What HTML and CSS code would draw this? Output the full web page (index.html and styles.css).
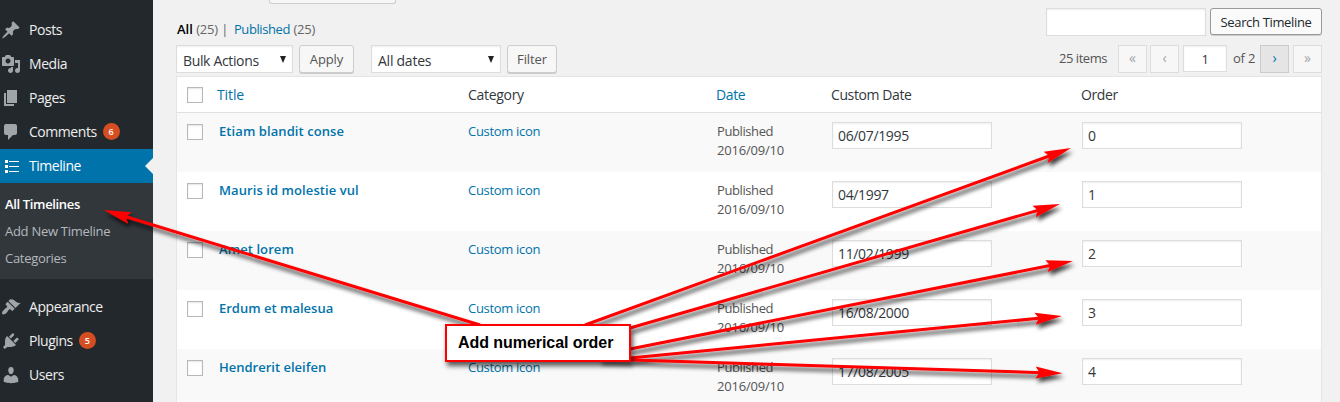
FILE: index.html
```html
<!DOCTYPE html>
<html lang="en">
<head>
<meta charset="utf-8">
<title>Timeline</title>
<link rel="stylesheet" href="styles.css">
</head>
<body>
<div class="admin">
  <nav class="sidebar">
    <a class="item"><svg class="icon" viewBox="0 0 20 20"><path d="M10.44 3.02l1.82-1.82 6.36 6.35-1.83 1.82c-1.05-.68-2.48-.57-3.41.36l-.75.75c-.92.93-1.04 2.35-.35 3.41l-1.83 1.82-2.41-2.41-2.8 2.79c-.42.42-3.38 2.71-3.8 2.29s1.86-3.39 2.28-3.81l2.79-2.79L4.1 9.36l1.83-1.82c1.05.69 2.48.57 3.4-.36l.75-.75c.93-.92 1.05-2.35.36-3.41z"/></svg><span>Posts</span></a>
    <a class="item"><svg class="icon" viewBox="0 0 20 20"><path d="M13 11V4c0-.55-.45-1-1-1h-1.67L9 1H5L3.67 3H2c-.55 0-1 .45-1 1v7c0 .55.45 1 1 1h10c.55 0 1-.45 1-1zM7 4.5c1.38 0 2.5 1.12 2.5 2.5S8.38 9.5 7 9.5 4.5 8.38 4.5 7 5.62 4.5 7 4.5zM14 6h5v10.5c0 1.38-1.12 2.5-2.5 2.5S14 17.88 14 16.5s1.12-2.5 2.5-2.5c.17 0 .34.02.5.05V9h-3V6zm-4 8.05V13h2v3.5c0 1.38-1.12 2.5-2.5 2.5S7 17.88 7 16.5 8.12 14 9.5 14c.17 0 .34.02.5.05z"/></svg><span>Media</span></a>
    <a class="item"><svg class="icon" viewBox="0 0 20 20"><path d="M6 15V2h10v13H6zm-1 1h8v2H3V5h2v11z"/></svg><span>Pages</span></a>
    <a class="item"><svg class="icon" viewBox="0 0 20 20"><path d="M5 2h9c1.1 0 2 .9 2 2v7c0 1.1-.9 2-2 2h-2l-5 5v-5H5c-1.1 0-2-.9-2-2V4c0-1.1.9-2 2-2z"/></svg><span>Comments</span><b class="count">6</b></a>
    <a class="item current"><svg class="icon" viewBox="0 0 20 20"><path d="M4 4h3v3H4zM4 9h3v3H4zM4 14h3v3H4zM8 5h10v1H8zM8 10h10v1H8zM8 15h10v1H8z"/></svg><span>Timeline</span><i class="notch"></i></a>
    <div class="submenu">
      <a class="sub active">All Timelines</a>
      <a class="sub add">Add New Timeline</a>
      <a class="sub">Categories</a>
    </div>
    <a class="item"><svg class="icon" viewBox="0 0 20 20"><path d="M14.48 11.06L7.41 3.99l1.5-1.5c.5-.56 2.3-.47 3.51.32 1.21.8 1.43 1.28 2.91 2.1 1.18.64 2.45 1.26 4.45.85zm-.71.71L6.7 4.7 4.93 6.47c-.39.39-.39 1.02 0 1.41l1.06 1.06c.39.39.39 1.03 0 1.42-.6.6-1.43 1.11-2.21 1.69-.35.26-.7.53-1.01.84C1.43 14.23.4 16.08 1.4 17.07c.99 1 2.84-.03 4.18-1.36.31-.31.58-.66.85-1.02.57-.78 1.08-1.61 1.69-2.21.39-.39 1.02-.39 1.41 0l1.06 1.06c.39.39 1.02.39 1.41 0z"/></svg><span>Appearance</span></a>
    <a class="item"><svg class="icon" viewBox="0 0 20 20"><path d="M13.11 4.36L9.87 7.6 8 5.73l3.24-3.24c.35-.34 1.05-.2 1.56.32.52.51.66 1.21.31 1.55zm-8 1.77l.91-1.12 9.01 9.01-1.19.84c-.71.71-2.63 1.16-3.82 1.16H6.14L4.9 17.26c-.59.59-1.54.59-2.12 0-.59-.58-.59-1.53 0-2.12l1.24-1.24v-3.88c0-1.13.4-3.19 1.09-3.89zm7.26 3.97l3.24-3.24c.34-.35 1.04-.21 1.55.31.52.51.66 1.21.31 1.55l-3.24 3.25z"/></svg><span>Plugins</span><b class="count">5</b></a>
    <a class="item"><svg class="icon" viewBox="0 0 20 20"><path d="M10 9.25c-2.27 0-2.73-3.44-2.73-3.44C7 4.02 7.82 2 9.97 2c2.16 0 2.98 2.02 2.71 3.81 0 0-.41 3.44-2.68 3.44zm0 2.57L12.72 10c2.39 0 4.52 2.33 4.52 4.53v2.49s-3.65 1.13-7.24 1.13c-3.65 0-7.24-1.13-7.24-1.13v-2.49c0-2.25 1.94-4.48 4.47-4.48z"/></svg><span>Users</span></a>
    <a class="item"><svg class="icon" viewBox="0 0 20 20"><path d="M9 9.5c0-1 2-1.5 4-1.5s3 1 3 3l-9 7-3-2z"/></svg></a>
  </nav>

  <main class="content">
    <div class="page-action"></div>
    <div class="top">
      <div class="views"><b>All</b> <span class="num">(25)</span> <span class="bar">|</span> <a>Published</a> <span class="num">(25)</span></div>
      <form class="search"><input class="field search-field" type="text"><button class="btn search-btn" type="button">Search Timeline</button></form>
    </div>
    <div class="tablenav">
      <div class="select bulk"><span>Bulk Actions</span><svg class="caret" viewBox="0 0 6 7"><path d="M0 0h6L3 7z"/></svg></div>
      <button class="btn apply" type="button">Apply</button>
      <div class="select dates"><span>All dates</span><svg class="caret" viewBox="0 0 6 7"><path d="M0 0h6L3 7z"/></svg></div>
      <button class="btn filter" type="button">Filter</button>
      <div class="pager">
        <span class="total">25 items</span>
        <span class="page-btn">«</span>
        <span class="page-btn">‹</span>
        <input class="field page-field" type="text" value="1">
        <span class="of">of 2</span>
        <span class="page-btn next">›</span>
        <span class="page-btn">»</span>
      </div>
    </div>
    <div class="table">
      <div class="row head"><i class="check"></i><a class="h-title">Title</a><span class="h-cat">Category</span><a>Date</a><span class="h-custom">Custom Date</span><span>Order</span></div>
      <div class="row odd"><i class="check"></i><a class="title">Etiam blandit conse</a><a class="cat">Custom icon</a><span class="date">Published<br><span class="day">2016/09/10</span></span><input class="field" type="text" value="06/07/1995"><input class="field" type="text" value="0"></div>
      <div class="row"><i class="check"></i><a class="title">Mauris id molestie vul</a><a class="cat">Custom icon</a><span class="date">Published<br><span class="day">2016/09/10</span></span><input class="field" type="text" value="04/1997"><input class="field" type="text" value="1"></div>
      <div class="row odd"><i class="check"></i><a class="title">Amet lorem</a><a class="cat">Custom icon</a><span class="date">Published<br><span class="day">2016/09/10</span></span><input class="field" type="text" value="11/02/1999"><input class="field" type="text" value="2"></div>
      <div class="row"><i class="check"></i><a class="title tight">Erdum et malesua</a><a class="cat">Custom icon</a><span class="date">Published<br><span class="day">2016/09/10</span></span><input class="field" type="text" value="16/08/2000"><input class="field" type="text" value="3"></div>
      <div class="row odd"><i class="check"></i><a class="title tight">Hendrerit eleifen</a><a class="cat">Custom icon</a><span class="date">Published<br><span class="day">2016/09/10</span></span><input class="field" type="text" value="17/08/2005"><input class="field" type="text" value="4"></div>
    </div>
  </main>

  <svg class="arrows" viewBox="0 0 1340 402">
    <defs>
      <marker id="tip" markerUnits="userSpaceOnUse" markerWidth="30" markerHeight="14" refX="14" refY="7" orient="auto" overflow="visible"><path d="M27 7L0 1L4 7L0 13z" fill="#f00"/></marker>
      <filter id="shade" filterUnits="userSpaceOnUse" x="0" y="0" width="1340" height="402"><feDropShadow dx="2" dy="4" stdDeviation="2" flood-color="#000" flood-opacity=".75"/></filter>
    </defs>
    <g class="shafts" filter="url(#shade)">
      <path d="M480 325L116.4 213.8"/>
      <path d="M585 325L1058.8 152.5"/>
      <path d="M630 328L1047.5 207.6"/>
      <path d="M630 349L1060.2 263.5"/>
      <path d="M630 358L1049 317.3"/>
      <path d="M600 359L1049.5 372.9"/>
    </g>
  </svg>
  <div class="callout">Add numerical order</div>
</div>
</body>
</html>
```
FILE: styles.css
```css
* { box-sizing: border-box; }
body { margin: 0; background: #f1f1f1; font: 13px/19px "Open Sans", "Noto Sans", sans-serif; color: #32373c; }
a { color: #0073aa; }
.admin { position: relative; width: 1340px; height: 402px; overflow: hidden; display: flex; }

.sidebar { width: 153px; flex: none; background: #23282d; padding-top: 13px; }
.item { display: flex; align-items: center; position: relative; height: 34px; padding-left: 1px; color: #eee; font-size: 14px; letter-spacing: -.45px; }
.item > span { margin-top: -1px; }
.icon { width: 20px; height: 20px; flex: none; margin-right: 8px; fill: #a0a5aa; }
.item.current { background: #0073aa; color: #fff; }
.current .icon { fill: #fff; }
.notch { position: absolute; right: 0; top: 9px; border: 8px solid transparent; border-left: 0; border-right-color: #f1f1f1; }
.count { width: 17px; height: 17px; margin: -1px 0 0 6px; border-radius: 50%; background: #d54e21; color: #fff; font-size: 9px; font-weight: 600; line-height: 17px; text-align: center; letter-spacing: 0; }
.submenu { height: 96px; padding: 8px 0 0 5px; margin-bottom: 11px; background: #32373c; }
.sub { display: block; height: 27px; line-height: 27px; color: #b4b9be; letter-spacing: -.28px; }
.sub.active { color: #fff; font-weight: 600; letter-spacing: -.35px; }

.content { flex: 1; min-width: 0; padding: 0 18px 0 23px; }
.page-action { width: 127px; height: 4px; margin-left: 93px; background: #f7f7f7; border: 1px solid #ccc; border-top: 0; border-radius: 0 0 3px 3px; }
.top { display: flex; justify-content: space-between; height: 41px; padding-top: 4px; }
.views { padding: 12px 0 0 1px; white-space: pre; }
.views b { color: #000; font-weight: 600; }
.views a { margin-left: 2px; letter-spacing: -.4px; }
.num { color: #666; letter-spacing: -.2px; }
.bar { color: #666; }
.search { display: flex; gap: 4px; }
.field { width: 160px; height: 27px; border: 1px solid #ddd; border-radius: 0; background: #fff; color: #32373c; font: 14px "Open Sans", sans-serif; letter-spacing: -.35px; padding: 2px 5px; box-shadow: inset 0 1px 2px rgba(0,0,0,.07); outline: 0; }
.search-field { height: 28px; }
.btn { height: 28px; padding: 0; border: 1px solid #ccc; border-radius: 3px; background: #f7f7f7; box-shadow: 0 1px 0 #ccc; color: #555; font: 13px/26px "Open Sans", sans-serif; letter-spacing: -.1px; }
.search-btn { width: 112px; height: 27px; border-color: #999; background: #fafafa; color: #23282d; letter-spacing: -.35px; }

.tablenav { display: flex; height: 31px; }
.select { display: flex; align-items: center; justify-content: space-between; height: 28px; border: 1px solid #ddd; background: #fff; padding: 2px 6px 0 6px; font-size: 14px; box-shadow: inset 0 1px 2px rgba(0,0,0,.07); }
.bulk { width: 117px; letter-spacing: -.35px; }
.caret { width: 6px; height: 7px; margin-top: -2px; fill: #222; }
.apply { width: 55px; margin-left: 6px; }
.dates { width: 130px; margin-left: 17px; letter-spacing: -.25px; }
.filter { width: 50px; margin-left: 6px; }
.pager { display: flex; margin-left: auto; color: #555; line-height: 27px; }
.total { margin-right: 11px; letter-spacing: -.45px; }
.page-btn { width: 29px; height: 28px; margin-right: 3px; border: 1px solid #ddd; background: #f7f7f7; color: #a0a5aa; font-size: 14px; line-height: 24px; text-align: center; }
.page-btn:last-child { margin-right: 0; margin-left: 1px; }
.page-btn.next { border-color: #ccc; background: #e5e5e5; color: #0073aa; }
.page-field { width: 44px; text-align: center; margin-left: 1px; font-size: 13px; }
.of { width: 22px; margin: 0 5px 0 6px; letter-spacing: -.2px; white-space: nowrap; }

.table { width: 1146px; height: 340px; border: 1px solid #e5e5e5; background: #fff; }
.row { display: grid; grid-template-columns: 42px 250px 248px 115px 250px 1fr; height: 59px; padding: 9px 0 0 0; align-items: start; justify-items: start; }
.row.odd { background: #f9f9f9; }
.row.head { height: 36px; padding-top: 0; border-bottom: 1px solid #e1e1e1; align-items: center; font-size: 14px; letter-spacing: -.4px; }
.head > :not(.check) { margin-left: -1px; }
.head > .h-title { margin-left: -2px; letter-spacing: -.1px; }
.head > .h-cat { letter-spacing: -.3px; }
.check { width: 16px; height: 16px; margin: 2px 0 0 10px; border: 1px solid #b4b9be; background: #fff; box-shadow: inset 0 1px 2px rgba(0,0,0,.1); }
.head .check { margin-top: 1px; }
.title { font-weight: 600; letter-spacing: .08px; }
.title.tight { letter-spacing: 0; }
.cat { margin-left: -1px; letter-spacing: -.3px; }
.date { color: #555; letter-spacing: -.4px; }
.day { letter-spacing: -.2px; }

.arrows { position: absolute; left: 0; top: 0; width: 1340px; height: 402px; }
.shafts path { stroke: #f00; stroke-width: 3; fill: none; marker-end: url(#tip); }
.callout { position: absolute; left: 445px; top: 324px; width: 186px; height: 38px; border: 2px solid #f00; background: #fff; padding-left: 11px; color: #000; font: bold 16px/33px "Liberation Sans", Arial, sans-serif; letter-spacing: -.06px; white-space: nowrap; box-shadow: 2px 4px 5px rgba(0,0,0,.65); }
```
